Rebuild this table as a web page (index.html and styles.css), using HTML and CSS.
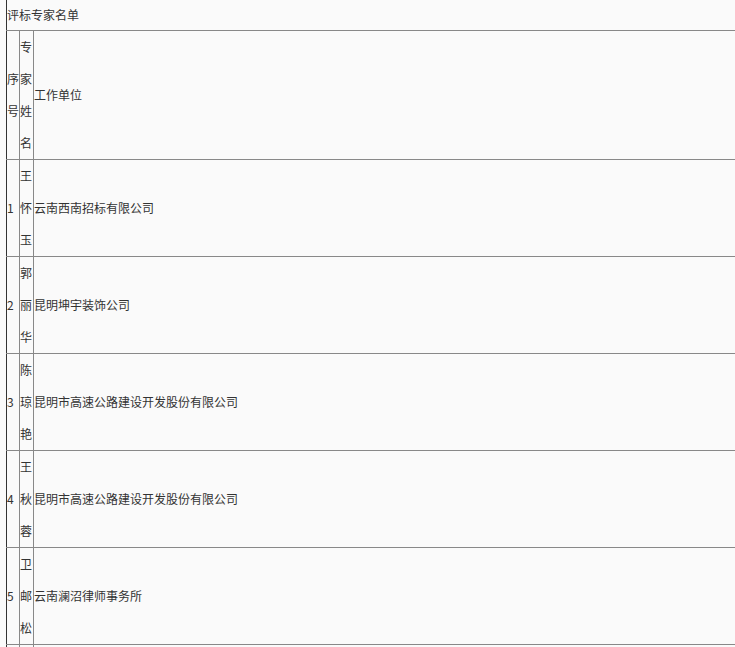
FILE: index.html
```html
<!DOCTYPE html>
<html lang="zh-CN">
<head>
    <meta charset="UTF-8">
    <meta name="viewport" content="width=device-width, initial-scale=1.0">
    <title>评标专家名单</title>
    <link rel="stylesheet" href="styles.css">
</head>
<body>
    <table class="expertTable">
        <tr class="titleRow">
            <td colspan="3">评标专家名单</td>
        </tr>
        <tr>
            <td class="colNo">序号</td>
            <td class="colName">专家姓名</td>
            <td>工作单位</td>
        </tr>
        <tr>
            <td class="colNo">1</td>
            <td class="colName">王怀玉</td>
            <td>云南西南招标有限公司</td>
        </tr>
        <tr>
            <td class="colNo">2</td>
            <td class="colName">郭丽华</td>
            <td>昆明坤宇装饰公司</td>
        </tr>
        <tr>
            <td class="colNo">3</td>
            <td class="colName">陈琼艳</td>
            <td>昆明市高速公路建设开发股份有限公司</td>
        </tr>
        <tr>
            <td class="colNo">4</td>
            <td class="colName">王秋蓉</td>
            <td>昆明市高速公路建设开发股份有限公司</td>
        </tr>
        <tr>
            <td class="colNo">5</td>
            <td class="colName">卫邮松</td>
            <td>云南澜沼律师事务所</td>
        </tr>
        <tr class="moreRow">
            <td class="colNo"></td>
            <td class="colName"></td>
            <td></td>
        </tr>
    </table>
</body>
</html>
```

FILE: styles.css
```css
html {
    overflow: hidden;
}

body {
    margin: 0 0 0 6px;
    background-color: #fafafa;
    color: #333;
    font-family: "Noto Sans CJK SC", "Noto Sans", sans-serif;
    font-size: 12px;
}

.expertTable {
    width: 760px;
    border-collapse: collapse;
    border-left: 1px solid #333;
}

.expertTable td {
    padding: 0;
    line-height: 32px;
    border: 1px solid #888;
    vertical-align: middle;
    text-align: left;
}

.expertTable td:first-child {
    border-left: 1px solid #333;
}

.titleRow td {
    border-top: none;
    line-height: 30px;
}

.moreRow td {
    height: 96px;
}

.colNo {
    width: 12px;
}

.colName {
    width: 13px;
}
```
